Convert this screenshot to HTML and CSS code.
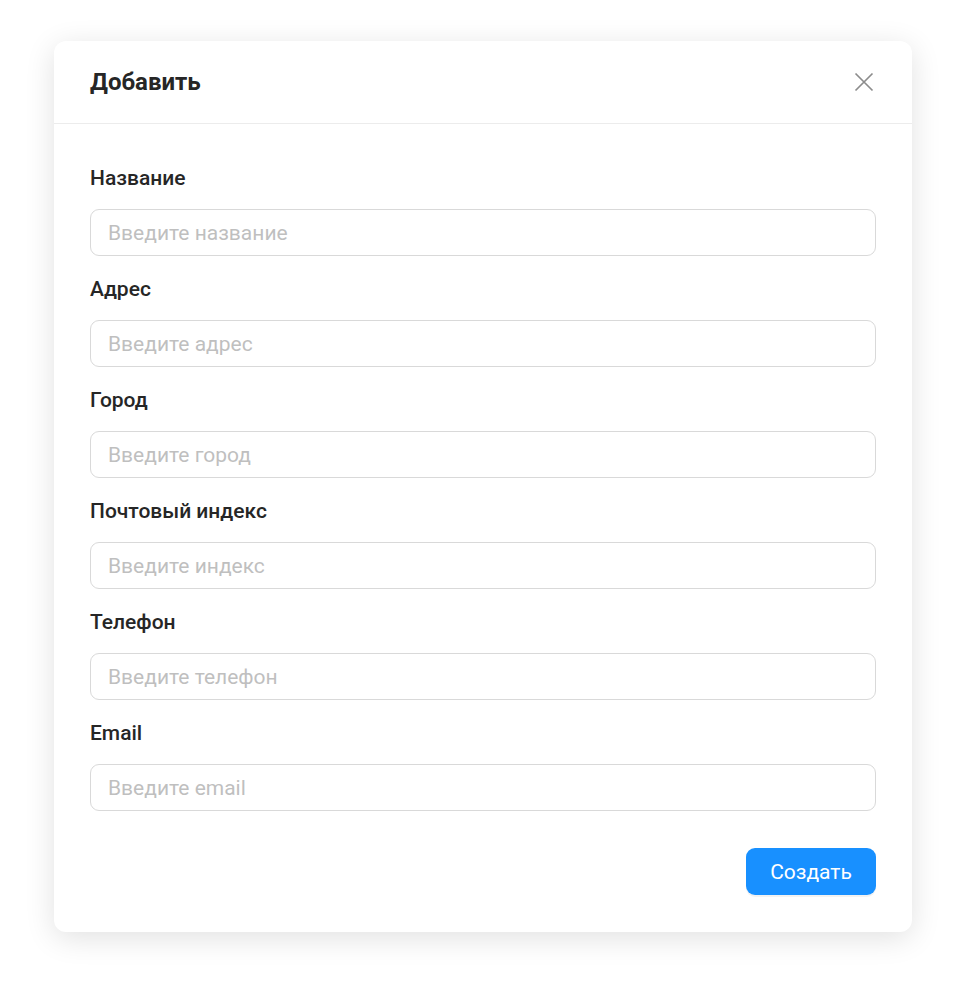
FILE: index.html
```html
<!DOCTYPE html>
<html lang="ru">
<head>
  <meta charset="UTF-8">
  <meta name="viewport" content="width=device-width, initial-scale=1.0">
  <title>Добавить</title>
  <link rel="stylesheet" href="styles.css">
</head>
<body>

  <div class="modal">
    <div class="modal-header">
      <h2>Добавить</h2>
      <button class="close" type="button" aria-label="Закрыть">
        <svg width="20" height="20" viewBox="0 0 20 20">
          <path d="M1.5 1.5 L18.5 18.5 M18.5 1.5 L1.5 18.5" stroke="#8c8c8c" stroke-width="1.7" fill="none"/>
        </svg>
      </button>
    </div>

    <form class="modal-body">
      <label class="field">
        <span>Название</span>
        <input type="text" placeholder="Введите название">
      </label>
      <label class="field">
        <span>Адрес</span>
        <input type="text" placeholder="Введите адрес">
      </label>
      <label class="field">
        <span>Город</span>
        <input type="text" placeholder="Введите город">
      </label>
      <label class="field">
        <span>Почтовый индекс</span>
        <input type="text" placeholder="Введите индекс">
      </label>
      <label class="field">
        <span>Телефон</span>
        <input type="text" placeholder="Введите телефон">
      </label>
      <label class="field">
        <span>Email</span>
        <input type="text" placeholder="Введите email">
      </label>

      <div class="actions">
        <button type="button" class="btn-primary">Создать</button>
      </div>
    </form>
  </div>

</body>
</html>
```

FILE: styles.css
```css
body {
  font-family: Roboto, "Liberation Sans", sans-serif;
  background-color: #fff;
  margin: 0;
  padding: 41px 0;
}

.modal {
  width: 858px;
  margin: 0 auto;
  background-color: #fff;
  border-radius: 12px;
  box-shadow: 0 6px 30px rgba(0, 0, 0, 0.12);
}

.modal-header {
  height: 82px;
  padding: 0 36px;
  display: flex;
  align-items: center;
  justify-content: space-between;
  border-bottom: 1px solid #ececec;
}

h2 {
  margin: 0;
  font-size: 24px;
  font-weight: 700;
  color: #262626;
}

.close {
  border: none;
  background: none;
  padding: 0;
  width: 20px;
  height: 20px;
  margin-right: 2px;
  cursor: pointer;
}

.modal-body {
  padding: 41px 36px 37px;
}

.field {
  display: block;
  margin-bottom: 20px;
}

.field span {
  display: block;
  font-size: 21px;
  font-weight: 500;
  line-height: 26px;
  color: #262626;
  margin-bottom: 18px;
}

input {
  display: block;
  box-sizing: border-box;
  width: 100%;
  height: 47px;
  padding: 0 17px;
  font-family: inherit;
  font-size: 21px;
  color: #262626;
  border: 1px solid #d9d9d9;
  border-radius: 9px;
  outline: none;
}

input::placeholder {
  color: #bfbfbf;
}

.actions {
  display: flex;
  justify-content: flex-end;
  margin-top: 37px;
}

.btn-primary {
  width: 130px;
  height: 47px;
  border: none;
  border-radius: 9px;
  background-color: #1890ff;
  color: #fff;
  font-family: inherit;
  font-size: 21px;
  box-shadow: 0 2px 0 rgba(0, 0, 0, 0.05);
  cursor: pointer;
}
```
